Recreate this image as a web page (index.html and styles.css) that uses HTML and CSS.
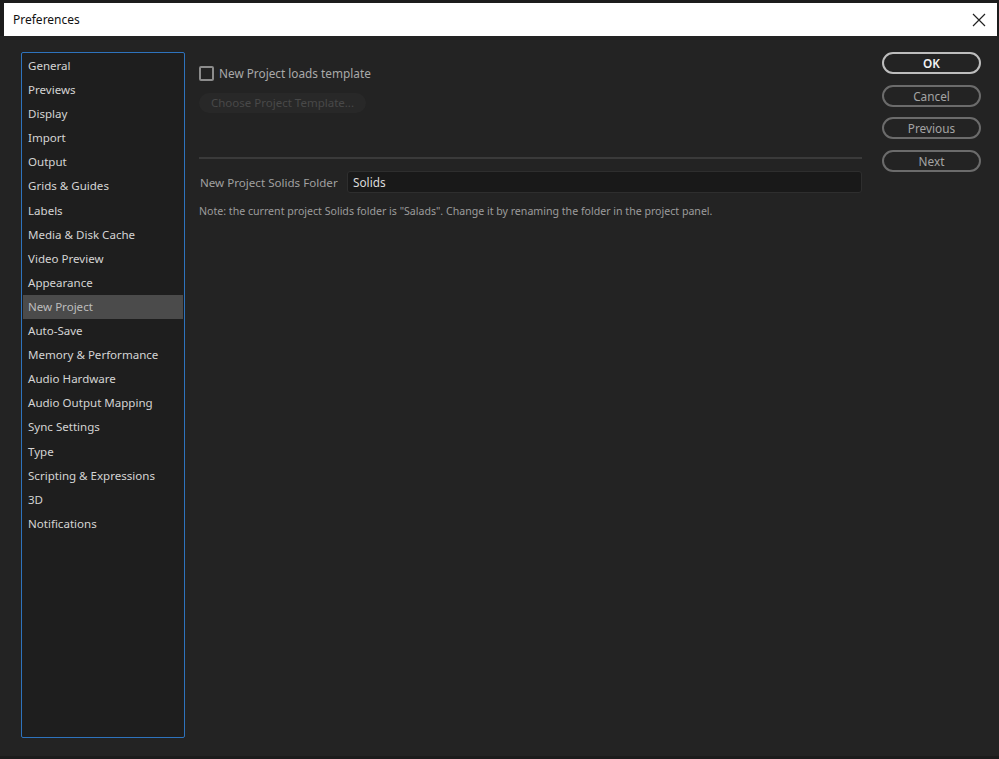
FILE: index.html
```html
<!DOCTYPE html>
<html>
<head>
<meta charset="utf-8">
<title>Preferences</title>
<link rel="stylesheet" href="styles.css">
</head>
<body>
<div class="window">
  <div class="titlebar">
    <span class="title">Preferences</span>
    <svg class="close" width="14" height="14" viewBox="0 0 14 14"><path d="M1 1 L13 13 M13 1 L1 13" stroke="#222" stroke-width="1.2" fill="none"/></svg>
  </div>
  <div class="content">
    <ul class="nav">
      <li>General</li>
      <li>Previews</li>
      <li>Display</li>
      <li>Import</li>
      <li>Output</li>
      <li>Grids &amp; Guides</li>
      <li>Labels</li>
      <li>Media &amp; Disk Cache</li>
      <li>Video Preview</li>
      <li>Appearance</li>
      <li class="active">New Project</li>
      <li>Auto-Save</li>
      <li>Memory &amp; Performance</li>
      <li>Audio Hardware</li>
      <li>Audio Output Mapping</li>
      <li>Sync Settings</li>
      <li>Type</li>
      <li>Scripting &amp; Expressions</li>
      <li>3D</li>
      <li>Notifications</li>
    </ul>
    <div class="main">
      <label class="check-row"><span class="checkbox"></span><span>New Project loads template</span></label>
      <div class="disabled-btn">Choose Project Template...</div>
      <div class="separator"></div>
      <div class="field-row">
        <span class="field-label">New Project Solids Folder</span>
        <div class="input">Solids</div>
      </div>
      <p class="note">Note: the current project Solids folder is "Salads". Change it by renaming the folder in the project panel.</p>
    </div>
    <div class="buttons">
      <div class="btn primary">OK</div>
      <div class="btn">Cancel</div>
      <div class="btn">Previous</div>
      <div class="btn">Next</div>
    </div>
  </div>
</div>
</body>
</html>
```

FILE: styles.css
```css
html, body {
  margin: 0;
  padding: 0;
  height: 100%;
}
body {
  background: #1c1c1c;
  font-family: "Noto Sans", "Open Sans", sans-serif;
  overflow: hidden;
}
.window {
  display: flex;
  flex-direction: column;
  height: 756px;
  padding-top: 3px;
  box-sizing: border-box;
}
.titlebar {
  height: 33px;
  margin: 0 2px 0 4px;
  background: #ffffff;
  display: flex;
  align-items: center;
  justify-content: space-between;
  padding: 0 11px 0 9px;
}
.title {
  font-family: "Noto Sans", sans-serif;
  font-size: 12px;
  color: #111;
}
.close {
  display: block;
}
.content {
  flex: 1;
  background: #232323;
  display: flex;
  align-items: flex-start;
  padding: 16px 0 0 21px;
}
.nav {
  list-style: none;
  margin: 0;
  padding: 1px;
  width: 160px;
  height: 682px;
  border: 1px solid #2e73bd;
  border-radius: 2px;
  background: #1e1e1e;
  flex-shrink: 0;
}
.nav li {
  height: 24.1px;
  line-height: 24px;
  padding-left: 5px;
  font-size: 11.55px;
  color: #d4d4d4;
  white-space: nowrap;
}
.nav li.active {
  background: #4b4b4b;
  color: #bdbdbd;
}
.main {
  margin-left: 14px;
  width: 663px;
  display: flex;
  flex-direction: column;
}
.check-row {
  display: flex;
  align-items: center;
  margin-top: 13px;
  height: 16px;
  font-size: 11.8px;
  color: #a9a9a9;
}
.checkbox {
  width: 11px;
  height: 11px;
  border: 2px solid #8c8c8c;
  border-radius: 2px;
  margin-right: 5px;
}
.disabled-btn {
  margin-top: 12px;
  width: 167px;
  height: 20px;
  line-height: 20px;
  border-radius: 10px;
  background: #282828;
  color: #494949;
  font-size: 11.5px;
  text-align: center;
}
.separator {
  margin-top: 44px;
  height: 2px;
  background: #3a3a3a;
}
.field-row {
  display: flex;
  align-items: center;
  margin-top: 12px;
}
.field-label {
  font-size: 11.6px;
  color: #a0a0a0;
  margin-left: 1px;
  width: 147px;
}
.input {
  flex: 1;
  height: 20px;
  line-height: 20px;
  background: #191919;
  border: 1px solid #2e2e2e;
  border-radius: 3px;
  padding-left: 5px;
  font-size: 11.8px;
  color: #dcdcdc;
}
.note {
  margin: 11px 0 0 0;
  font-size: 10.6px;
  color: #9c9c9c;
}
.buttons {
  margin-left: 20px;
  width: 99px;
  display: flex;
  flex-direction: column;
  gap: 10.7px;
  margin-top: 0;
}
.btn {
  height: 18px;
  line-height: 18px;
  border: 2px solid #6b6b6b;
  border-radius: 11px;
  text-align: center;
  font-size: 11.8px;
  color: #a4a4a4;
}
.btn.primary {
  border-color: #bdbdbd;
  color: #f2f2f2;
  font-weight: 600;
}
```
